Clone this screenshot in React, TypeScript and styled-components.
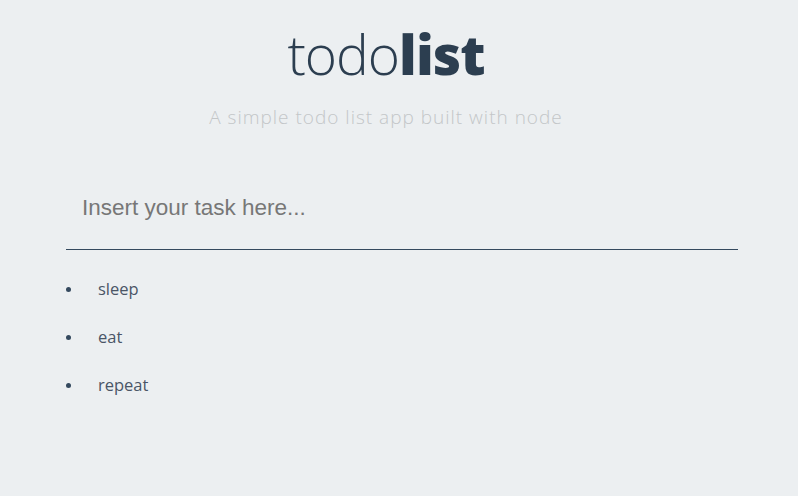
import styled, { createGlobalStyle } from "styled-components"

const GlobalStyle = createGlobalStyle`
    html, body {
        margin: 0;
        padding: 0;
        background: #eceff1;
    }
    body {
        font-family: "Open Sans", "DejaVu Sans", sans-serif;
    }
`

const Page = styled.div`
    width: 100%;
    min-height: 496px;
    display: flex;
    flex-direction: column;
    align-items: center;
`

const Header = styled.header`
    display: flex;
    flex-direction: column;
    align-items: center;
    padding-top: 18px;
    margin-left: -26px;
`

const Title = styled.h1`
    margin: 0;
    font-size: 55px;
    line-height: 72px;
    color: #2c3e50;
    font-weight: 300;
    letter-spacing: -1px;
    b {
        font-weight: 800;
    }
`

const Subtitle = styled.p`
    margin: 14px 0 0;
    font-size: 19px;
    font-weight: 300;
    letter-spacing: 1px;
    color: #c3c6c8;
`

const Main = styled.main`
    width: 672px;
    margin-top: 47px;
    margin-left: 6px;
`

const TaskInput = styled.input`
    display: block;
    width: 100%;
    box-sizing: border-box;
    height: 73px;
    padding: 0 16px 10px;
    border: 0;
    border-bottom: 1px solid #34495e;
    background: transparent;
    font-family: "Liberation Sans", Arial, sans-serif;
    font-size: 22.5px;
    color: #333;
    outline: none;
    &::placeholder {
        color: #777;
    }
`

const List = styled.ul`
    margin: 27px 0 0;
    padding: 0;
    list-style: none;
    color: #4a5566;
`

const Item = styled.li`
    display: flex;
    align-items: center;
    font-size: 16.5px;
    line-height: 24px;
    margin-bottom: 24px;
    &::before {
        content: "";
        width: 5px;
        height: 5px;
        border-radius: 50%;
        background: #34495e;
        margin: 1px 27px 0 0;
    }
`

const tasks = ["sleep", "eat", "repeat"]

export default function App() {
    return (
        <>
            <GlobalStyle />
            <Page>
                <Header>
                    <Title>todo<b>list</b></Title>
                    <Subtitle>A simple todo list app built with node</Subtitle>
                </Header>
                <Main>
                    <TaskInput type="text" placeholder="Insert your task here..." />
                    <List>
                        {tasks.map(task => (
                            <Item key={task}>{task}</Item>
                        ))}
                    </List>
                </Main>
            </Page>
        </>
    )
}
